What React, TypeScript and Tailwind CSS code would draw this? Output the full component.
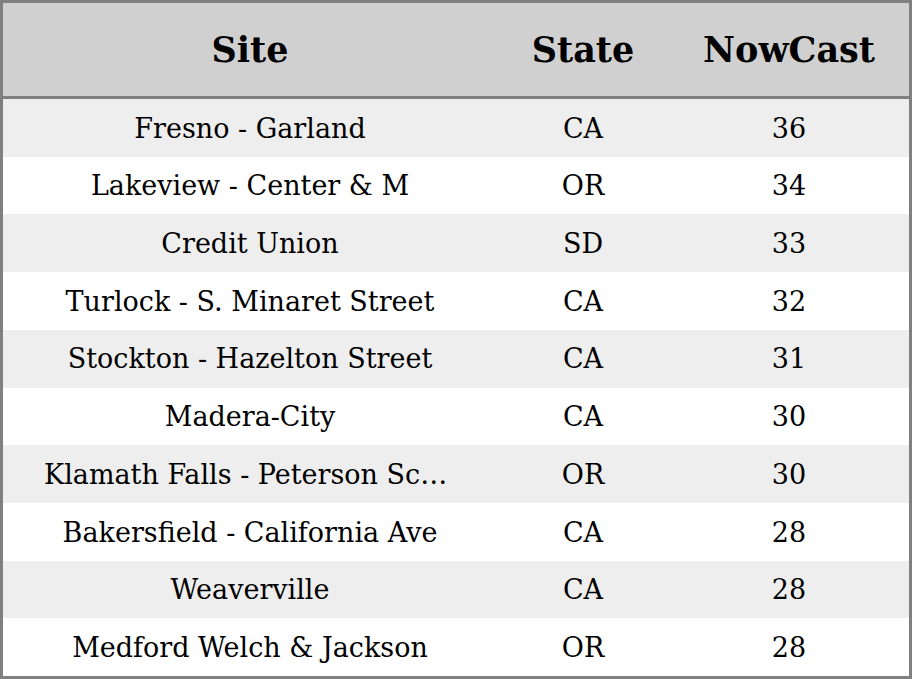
const rows = [
  { site: "Fresno - Garland", state: "CA", nowcast: 36 },
  { site: "Lakeview - Center & M", state: "OR", nowcast: 34 },
  { site: "Credit Union", state: "SD", nowcast: 33 },
  { site: "Turlock - S. Minaret Street", state: "CA", nowcast: 32 },
  { site: "Stockton - Hazelton Street", state: "CA", nowcast: 31 },
  { site: "Madera-City", state: "CA", nowcast: 30 },
  { site: "Klamath Falls - Peterson School", state: "OR", nowcast: 30 },
  { site: "Bakersfield - California Ave", state: "CA", nowcast: 28 },
  { site: "Weaverville", state: "CA", nowcast: 28 },
  { site: "Medford Welch & Jackson", state: "OR", nowcast: 28 },
];

export default function App() {
  return (
    <div
      className="flex h-[679px] w-[912px] flex-col border-[3px] border-[#808080] bg-white text-black"
      style={{ fontFamily: '"DejaVu Serif", serif' }}
    >
      <div className="flex h-[96px] shrink-0 items-center border-b-[3px] border-[#808080] bg-[#d0d0d0] pt-[2px] text-[35px] font-bold">
        <div className="w-[494px] text-center">Site</div>
        <div className="w-[172px] text-center">State</div>
        <div className="flex-1 text-center">NowCast</div>
      </div>
      {rows.map((r, i) => (
        <div
          key={i}
          className={`flex flex-1 items-center pt-[2px] text-[27px] ${i % 2 === 0 ? "bg-[#eeeeee]" : "bg-white"}`}
        >
          <div className="w-[494px] truncate px-[41px] text-center">{r.site}</div>
          <div className="w-[172px] text-center">{r.state}</div>
          <div className="flex-1 text-center">{r.nowcast}</div>
        </div>
      ))}
    </div>
  );
}
